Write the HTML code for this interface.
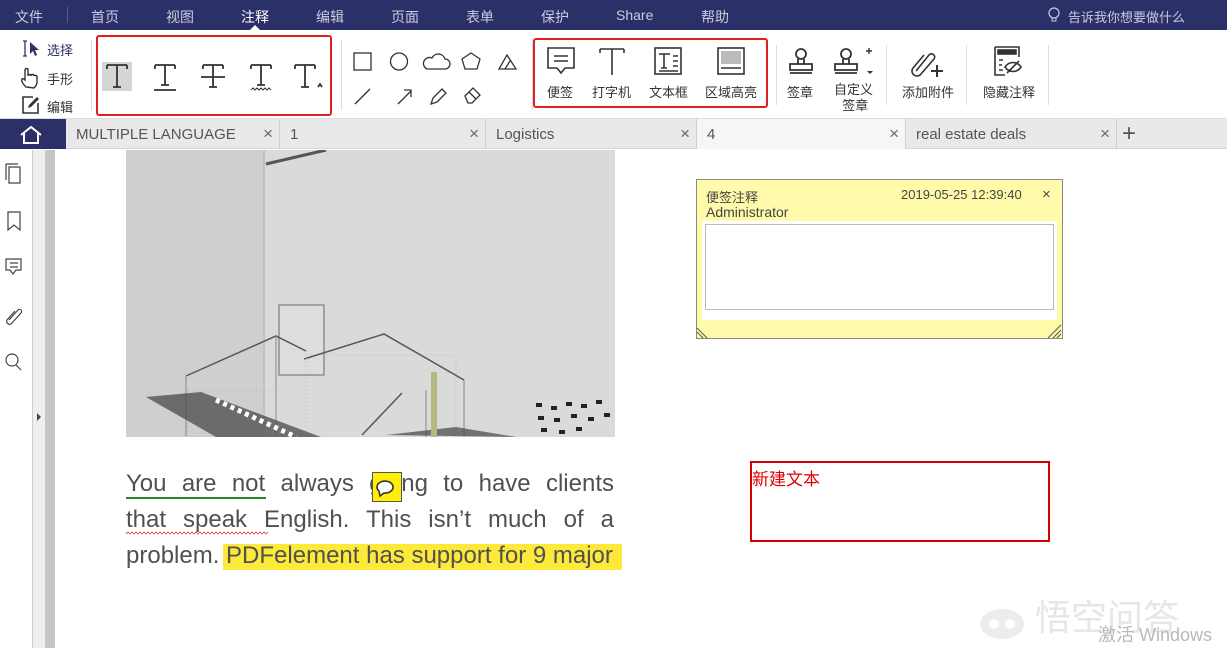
<!DOCTYPE html>
<html><head><meta charset="utf-8"><style>
*{margin:0;padding:0;box-sizing:border-box}
body{width:1227px;height:648px;overflow:hidden;background:#fff;font-family:"Liberation Sans","Noto Sans CJK SC",sans-serif;position:relative;color:#333}
.a{position:absolute}
.top{left:0;top:0;width:1227px;height:30px;background:#2c3068}
.top span{position:absolute;top:7px;font-size:14px;color:#c8cbe0}
.tb{left:0;top:30px;width:1227px;height:89px;background:#fff;border-bottom:1px solid #ddd}
.lbl{position:absolute;font-size:13px;color:#333;text-align:center;white-space:nowrap}
.sep{position:absolute;width:1px;background:#ddd}
.tabs{left:0;top:119px;width:1227px;height:30px;background:#e9e9e9;border-bottom:1px solid #d5d5d5}
.tab{position:absolute;top:0;height:30px;font-size:15px;color:#555;padding:7px 10px;border-right:1px solid #d0d0d0}
.tab i{position:absolute;right:6px;top:5px;font-style:normal;font-size:17px;color:#666}
.red{position:absolute;border:2px solid #e02020;border-radius:3px}
svg{position:absolute;overflow:visible}
.txt{font-family:"Liberation Sans Narrow","Liberation Sans",sans-serif;font-size:24px;color:#505050;position:absolute;white-space:nowrap}
</style></head><body>
<div class="a top">
<span style="left:15px">文件</span>
<div class="a" style="left:67px;top:7px;width:1px;height:16px;background:#555a88"></div>
<span style="left:91px">首页</span><span style="left:166px">视图</span><span style="left:241px;color:#fff">注释</span>
<span style="left:316px">编辑</span><span style="left:391px">页面</span><span style="left:466px">表单</span><span style="left:541px">保护</span>
<span style="left:616px">Share</span><span style="left:701px">帮助</span>
<span style="left:1068px;font-size:13px">告诉我你想要做什么</span>
<svg style="left:1048px;top:7px" width="12" height="16"><circle cx="6" cy="6" r="5" fill="none" stroke="#c8cbe0" stroke-width="1.2"/><path d="M4 11v3h4v-3" fill="none" stroke="#c8cbe0"/></svg>
<div class="a" style="left:250px;top:25px;border:5px solid transparent;border-bottom-color:#fff;border-top:0"></div>
</div>
<div class="a tb">
<svg style="left:22px;top:10px" width="22" height="18"><path d="M1 1h4M3 1v15M1 16h4" stroke="#2c3068" fill="none" stroke-width="1.3"/><path d="M8 2l9 8h-4l2 5-2 1-2-5-3 3z" fill="#2c3068"/></svg>
<span class="lbl" style="left:47px;top:10px;color:#2c3068">选择</span>
<svg style="left:20px;top:37px" width="20" height="22"><path d="M6 20c-3-3-5-6-4-8 1-1 2 0 3 1V3c0-2 3-2 3 0v6c0-2 3-2 3 0 0-2 3-2 3 0 0-1 3-1 3 1v5c0 3-2 5-3 6z" fill="none" stroke="#333" stroke-width="1.4"/></svg>
<span class="lbl" style="left:47px;top:39px">手形</span>
<svg style="left:21px;top:65px" width="20" height="20"><path d="M12 2H2v16h15V8" fill="none" stroke="#333" stroke-width="1.6"/><path d="M7 13l1-3 8-8 2 2-8 8z" fill="#333"/></svg>
<span class="lbl" style="left:47px;top:67px">编辑</span>
<div class="sep" style="left:91px;top:10px;height:70px"></div>
<div class="a" style="left:102px;top:32px;width:30px;height:29px;background:#d5d5d5"></div>
<svg style="left:104px;top:30px" width="230" height="36" fill="none" stroke="#333" stroke-width="1.8">
<path d="M3 5h20M13 5v22M9 27h8M3 5v4M23 5v4"/>
<g transform="translate(48 0)"><path d="M3 5h20M13 5v20M9 25h8M3 5v4M23 5v4M2 30h22"/></g>
<g transform="translate(96 0)"><path d="M3 5h20M13 5v22M9 27h8M3 5v4M23 5v4M1 17h24"/></g>
<g transform="translate(144 0)"><path d="M3 5h20M13 5v20M9 25h8M3 5v4M23 5v4"/><path d="M3 30l2-2 2 2 2-2 2 2 2-2 2 2 2-2 2 2 2-2 2 2" stroke-width="1"/></g>
<g transform="translate(188 0)"><path d="M3 5h20M13 5v22M9 27h8M3 5v4M23 5v4M26 27l2-3 2 3" /></g>
</svg>
<div class="red" style="left:96px;top:5px;width:236px;height:81px"></div>
<div class="sep" style="left:341px;top:10px;height:70px"></div>
<svg style="left:353px;top:22px" width="170" height="55" fill="none" stroke="#333" stroke-width="1.3">
<rect x="1" y="1" width="17" height="17"/><circle cx="46" cy="9.5" r="8.5"/>
<path d="M74 17h18a5 5 0 0 0 0-10 7 7 0 0 0-13-1 5 5 0 0 0-5 11z"/>
<path d="M118 1l9 6-3 10h-12l-3-10z"/><path d="M146 17l8-14 9 14zM152 17l5-8"/>
<path d="M2 52l15-15"/><path d="M45 52l13-13M51 38h7v7" /><path d="M78 52l2-6 9-9 4 4-9 9z"/><path d="M112 44l8-8 7 7-8 8h-4z M116 40l7 7"/>
</svg>
<div class="sep" style="left:532px;top:10px;height:70px"></div>
<svg style="left:546px;top:16px" width="210" height="32" fill="none" stroke="#333" stroke-width="1.6">
<path d="M2 2h26v20H19l-4 5-4-5H2z M8 10h14M8 15h14"/>
<path d="M54 3h24M66 3v26M54 3v4M78 3v4"/>
<rect x="109" y="2" width="26" height="26"/><path d="M113 8h11M118 8v14M115 22h6M127 10h5M127 15h5M127 20h5M113 25h19"/>
<rect x="172" y="2" width="26" height="26"/><rect x="175" y="5" width="20" height="13" fill="#bbb" stroke="none"/><path d="M175 22h20"/>
</svg>
<span class="lbl" style="left:547px;top:52px">便签</span>
<span class="lbl" style="left:592px;top:52px">打字机</span>
<span class="lbl" style="left:649px;top:52px">文本框</span>
<span class="lbl" style="left:705px;top:52px">区域高亮</span>
<div class="red" style="left:533px;top:8px;width:235px;height:70px"></div>
<div class="sep" style="left:776px;top:15px;height:60px"></div>
<svg style="left:786px;top:17px" width="110" height="30" fill="none" stroke="#333" stroke-width="1.8">
<circle cx="15" cy="7" r="5"/><path d="M12 12v5M18 12v5M4 17h22v6H4zM4 26h22"/>
<circle cx="60" cy="7" r="5"/><path d="M57 12v5M63 12v5M49 17h22v6H49zM49 26h22"/>
<path d="M80 4h6M83 1v6" stroke-width="1.4"/><path d="M81 24l3 3 3-3z" fill="#333" stroke="none"/>
</svg>
<span class="lbl" style="left:787px;top:52px">签章</span>
<span class="lbl" style="left:834px;top:52px;line-height:16px">自定义<br>&nbsp;签章</span>
<div class="sep" style="left:886px;top:15px;height:60px"></div>
<svg style="left:910px;top:17px" width="36" height="30" fill="none" stroke="#333" stroke-width="1.6">
<path d="M6 24l13-16a3 3 0 0 1 5 4l-13 15a5 5 0 0 1-8-6l11-13"/><path d="M21 24h12M27 18v12" stroke-width="2"/>
</svg>
<span class="lbl" style="left:902px;top:52px">添加附件</span>
<div class="sep" style="left:966px;top:15px;height:60px"></div>
<svg style="left:993px;top:15px" width="30" height="32" fill="none" stroke="#333" stroke-width="1.6">
<path d="M2 2h24v10M2 2v28h10"/><rect x="5" y="5" width="18" height="4" fill="#333"/><path d="M6 15h4M6 20h3M6 25h4"/>
<path d="M12 22c4-6 12-6 16 0-4 6-12 6-16 0zM14 28l12-12"/>
</svg>
<span class="lbl" style="left:983px;top:52px">隐藏注释</span>
<div class="sep" style="left:1048px;top:15px;height:60px"></div>
</div>
<div class="a tabs">
<div class="tab" style="left:0;width:66px;background:#2c3068;border:0"></div>
<svg style="left:20px;top:7px" width="22" height="18" fill="none" stroke="#fff" stroke-width="2"><path d="M1 9l10-8 10 8M4 7v10h14V7"/></svg>
<div class="tab" style="left:66px;width:214px">MULTIPLE LANGUAGE<i>×</i></div>
<div class="tab" style="left:280px;width:206px">1<i>×</i></div>
<div class="tab" style="left:486px;width:211px">Logistics<i>×</i></div>
<div class="tab" style="left:697px;width:209px;background:#f6f6f6">4<i>×</i></div>
<div class="tab" style="left:906px;width:211px">real estate deals<i>×</i></div>
<span class="a" style="left:1122px;top:1px;font-size:24px;color:#555">+</span>
</div>
<div class="a" style="left:32px;top:150px;width:1px;height:498px;background:#ccc"></div>
<div class="a" style="left:33px;top:150px;width:12px;height:498px;background:#efefef"></div>
<div class="a" style="left:45px;top:150px;width:10px;height:498px;background:#c6c6c6"></div>
<svg style="left:4px;top:162px" width="20" height="220" fill="none" stroke="#444" stroke-width="1.2">
<path d="M2 2h12M2 2v16M5 5h11v16H5z"/>
<path d="M4 50h12v18l-6-5-6 5z"/>
<path d="M2 97h15v11H12l-3 4-3-4H2zM6 101h8M6 105h8"/>
<path d="M5 158l9-10a2 2 0 0 1 3 3l-10 11a3 3 0 0 1-4-4l8-9"/>
<circle cx="8" cy="198" r="6"/><path d="M12 203l5 5"/>
</svg>
<div class="a" style="left:37px;top:413px;border:4px solid transparent;border-left:4px solid #444;border-right:0"></div>
<svg style="left:126px;top:150px;overflow:hidden" width="489" height="287">
<rect width="489" height="287" fill="#cdd0cf"/>
<rect x="138" width="351" height="287" fill="#d8dbd9"/>
<path d="M138 0v287" stroke="#c0c3c2" stroke-width="2"/>
<path d="M140 14l60-14" stroke="#555" stroke-width="3"/>
<rect x="153" y="155" width="45" height="70" fill="#dcdedd" stroke="#666"/>
<path d="M60 226l90-40 30 15M178 209l80 -25 80 46" stroke="#555" stroke-width="1.5" fill="none"/>
<path d="M60 226v60M150 186v100M300 240v47M338 230v57" stroke="#888" stroke-width="1" fill="none"/>
<path d="M62 240h88v47H62zM180 205h150v82H180z" fill="none" stroke="#999" stroke-width=".6" stroke-dasharray="1 3"/>
<path d="M20 247l55-5 120 45H90z" fill="#4a4a4a" opacity=".75"/>
<path d="M260 285l70-8 60 10z" fill="#444" opacity=".7"/>
<path d="M90 250l80 37" stroke="#fff" stroke-width="5" stroke-dasharray="4 4"/>
<path d="M236 285l40-42" stroke="#555" stroke-width="1.5"/>
<path d="M308 222v65" stroke="#b5b880" stroke-width="6"/>
<path d="M410 255h6M425 258h6M440 254h6M455 256h6M470 252h6M412 268h6M428 270h6M445 266h6M462 269h6M478 265h6M415 280h6M433 282h6M450 279h6" stroke="#222" stroke-width="4"/>
</svg>
<div class="txt" style="left:126px;top:470px;width:488px;text-align:justify;text-align-last:justify">You are not always going to have clients</div>
<div class="a" style="left:126px;top:497px;width:140px;height:2px;background:#2a8a2a"></div>
<div class="a" style="left:372px;top:472px;width:30px;height:30px;background:#ffef00;border:1px solid #555"></div>
<svg style="left:376px;top:477px" width="22" height="20" fill="none" stroke="#333" stroke-width="1.6"><path d="M3 14a8 6 0 1 1 5 2l-4 3z" fill="#fff"/></svg>
<div class="txt" style="left:126px;top:506px;width:488px;text-align:justify;text-align-last:justify">that speak English. This isn’t much of a</div>
<svg style="left:126px;top:531px" width="126" height="5"><path d="M0 3l2-2 2 2 2-2 2 2 2-2 2 2 2-2 2 2 2-2 2 2 2-2 2 2 2-2 2 2 2-2 2 2 2-2 2 2 2-2 2 2 2-2 2 2 2-2 2 2 2-2 2 2 2-2 2 2 2-2 2 2 2-2 2 2 2-2 2 2 2-2 2 2 2-2 2 2 2-2 2 2 2-2 2 2 2-2 2 2 2-2 2 2 2-2 2 2 2-2 2 2 2-2 2 2 2-2 2 2 2-2 2 2 2-2 2 2 2-2 2 2 2-2 2 2 2-2 2 2 2-2 2 2 2-2 2 2 2-2 2 2 2-2" stroke="#e04040" fill="none" stroke-width=".8"/></svg>
<div class="a" style="left:223px;top:544px;width:399px;height:26px;background:#fde93a"></div>
<div class="txt" style="left:126px;top:542px">problem. PDFelement has support for 9 major</div>
<div class="a" style="left:696px;top:179px;width:367px;height:160px;background:#fffbaa;border:1px solid #888"></div>
<span class="a" style="left:706px;top:187px;font-size:13px;color:#444">便签注释</span>
<span class="a" style="left:901px;top:187px;font-size:13px;color:#444">2019-05-25 12:39:40</span>
<span class="a" style="left:1042px;top:186px;font-size:15px;color:#444">×</span>
<span class="a" style="left:706px;top:204px;font-size:14px;color:#444">Administrator</span>
<div class="a" style="left:702px;top:221px;width:355px;height:99px;background:#fff"></div>
<div class="a" style="left:705px;top:224px;width:349px;height:86px;background:#fff;border:1px solid #bbb"></div>
<svg style="left:697px;top:325px" width="365" height="14" stroke="#555" fill="none"><path d="M0 3l10 10M0 7l6 6M351 13l13-13M356 13l8-8M360 13l4-4"/></svg>
<div class="a" style="left:750px;top:461px;width:300px;height:81px;border:2px solid #d80000"></div>
<span class="a" style="left:752px;top:465px;font-size:17px;color:#e00000;font-family:'Noto Sans CJK SC',sans-serif">新建文本</span>
<svg style="left:977px;top:602px" width="50" height="40"><ellipse cx="25" cy="22" rx="22" ry="15" fill="#ececec"/><circle cx="17" cy="22" r="5" fill="#fff"/><circle cx="33" cy="22" r="5" fill="#fff"/></svg>
<span class="a" style="left:1035px;top:590px;font-size:36px;line-height:50px;color:#e6e6e6;font-family:'Noto Sans CJK SC',sans-serif">悟空问答</span>
<span class="a" style="left:1098px;top:621px;font-size:18px;color:#b9b9b9">激活 Windows</span>
</body></html>
